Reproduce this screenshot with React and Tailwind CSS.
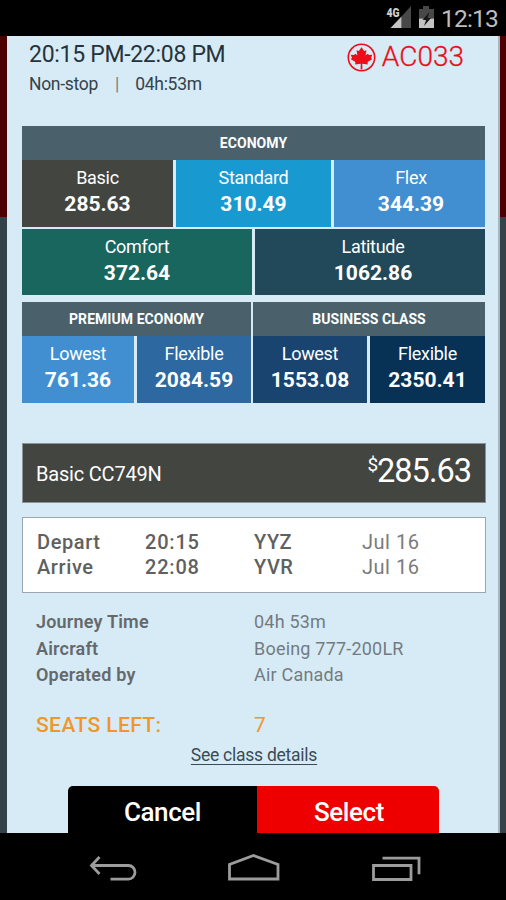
import React from 'react';

function StatusBar() {
  return (
    <div className="h-9 bg-black flex items-center justify-end pr-2">
      <svg className="w-[50px] h-6 mr-[6px]" viewBox="385 6 50 24">
        <text x="386.500" y="17" fill="#d0d0d0" fontSize="12" fontWeight="900" fontFamily="Roboto, sans-serif" textLength="13" lengthAdjust="spacingAndGlyphs">4G</text>
        <path d="M401.500 16.500L411 6v22h-9.500z" fill="#484848" />
        <path d="M390.500 28l11-11.500V28z" fill="#c4c4c4" />
        <path d="M419 9h4V6h6v3h5v9.500h-15z" fill="#484848" />
        <path d="M419 18.500h15V28h-15z" fill="#c4c4c4" />
        <path d="M429.500 12l-7 8h3.500l-2 6 7-8h-3.500z" fill="#161616" />
      </svg>
      <span className="text-[24.5px] leading-none text-[#bebebe] tracking-[-0.8px] mt-[2px]">12:13</span>
    </div>
  );
}

function FareHeader({ title }) {
  return (
    <div className="h-[34px] bg-[#4a616b] flex items-center justify-center text-white font-bold text-[14px] tracking-[0.05px]">
      {title}
    </div>
  );
}

function Fare({ name, price, color }) {
  return (
    <div className={`h-full flex flex-col items-center text-white pt-1.5 ${color}`}>
      <span className="text-[18px] tracking-[-0.3px] leading-6">{name}</span>
      <span className="text-[21px] leading-[26px] font-bold mt-px">{price}</span>
    </div>
  );
}

function Fares() {
  return (
    <div className="mt-[31px] mr-px">
      <FareHeader title="ECONOMY" />
      <div className="grid grid-cols-[151px_155px_1fr] gap-[3px] h-[67px]">
        <Fare name="Basic" price="285.63" color="bg-[#434541]" />
        <Fare name="Standard" price="310.49" color="bg-[#1899d0]" />
        <Fare name="Flex" price="344.39" color="bg-[#418fd0] pl-[3px]" />
      </div>
      <div className="grid grid-cols-[230px_1fr] gap-[3px] h-[66px] mt-[2px]">
        <Fare name="Comfort" price="372.64" color="bg-[#19665f]" />
        <Fare name="Latitude" price="1062.86" color="bg-[#21495a] pl-1.5" />
      </div>
      <div className="grid grid-cols-[229px_1fr] gap-[2px] mt-[7px]">
        <div>
          <FareHeader title="PREMIUM ECONOMY" />
          <div className="grid grid-cols-[112px_114px] gap-[3px] h-[67px]">
            <Fare name="Lowest" price="761.36" color="bg-[#418fd0]" />
            <Fare name="Flexible" price="2084.59" color="bg-[#2d68a0]" />
          </div>
        </div>
        <div>
          <FareHeader title="BUSINESS CLASS" />
          <div className="grid grid-cols-[114px_1fr] gap-[3px] h-[67px]">
            <Fare name="Lowest" price="1553.08" color="bg-[#1a4470]" />
            <Fare name="Flexible" price="2350.41" color="bg-[#073256]" />
          </div>
        </div>
      </div>
    </div>
  );
}

function Leg({ label, time, airport, date }) {
  return (
    <div className="grid grid-cols-[108px_109px_108px_1fr] text-[20px] leading-[25px] tracking-[0.5px] text-[#606060]">
      <span className="font-medium tracking-[0.6px]">{label}</span>
      <span className="font-medium tracking-[0.8px]">{time}</span>
      <span className="font-medium">{airport}</span>
      <span className="text-[#7b7b7b]">{date}</span>
    </div>
  );
}

function Detail({ label, value }) {
  return (
    <div className="grid grid-cols-[218px_1fr] text-[18px] leading-[26.5px] text-[#65696c]">
      <span className="font-semibold tracking-[0.2px]">{label}</span>
      <span className="text-[#747b80] tracking-[0.2px]">{value}</span>
    </div>
  );
}

function NavBar() {
  return (
    <div className="h-[67px] bg-black">
      <svg className="w-full h-full" viewBox="0 833 506 67" fill="none" stroke="#9c9c9c" strokeWidth="2.800">
        <path d="M99.500 857l-8 8.500 8 8.500M92 865.500h36.500a6.500 6.800 0 010 13.600H110.500" />
        <path d="M229.500 879V864.500L253.500 855.500 278 864.500V879z" />
        <path d="M373.500 865.500h37.500v14h-37.500zM382.500 858.200h36.500v16" />
      </svg>
    </div>
  );
}

function App() {
  return (
    <div className="w-[506px] h-[900px] overflow-hidden bg-black font-[Roboto,sans-serif] flex flex-col">
      <StatusBar />
      <div className="h-[797px] bg-linear-to-b from-[#4d0000] from-[181px] to-[#35424a] to-[181px] pl-[7px] pr-[6px]">
        <div className="h-full bg-[#d7ebf6] border-r-2 border-r-[#a7b5bd] pl-[15px] pr-[12px] flex flex-col">
          <div className="flex justify-between pl-[7px] pr-[22px] h-[59px]">
            <div className="text-[#26333c]">
              <h1 className="text-[23px] leading-7 mt-[5px] tracking-[-0.3px]">20:15 PM-22:08 PM</h1>
              <p className="text-[17.5px] leading-6 mt-[3px] flex text-[#34424b]">
                <span className="tracking-[-0.3px]">Non-stop</span>
                <span className="ml-[17px] mr-4 text-[#72808a]">|</span>
                <span className="tracking-[-0.3px]">04h:53m</span>
              </p>
            </div>
            <div className="flex items-center h-[42px] text-[#ec0d18] text-[28px]">
              <svg className="w-[29px] h-[29px] mr-[6px]" viewBox="0 0 29 29">
                <circle cx="14.500" cy="14.500" r="13.200" fill="none" stroke="currentColor" strokeWidth="1.600" />
                <path fill="currentColor" d="M14.500 4.300l2.700 3.700 2.300-.7-.9 5 2.200-1.500 1.200 1.300 3.200-.4-1.100 3 1 1.500-4.500 2.700.2 2.600-5.500-.7.100 5.700h-1.800l.1-5.700-5.500.7.200-2.600-4.500-2.700 1-1.500-1.100-3 3.200.4 1.200-1.300 2.200 1.500-.9-5 2.300.7z" />
              </svg>
              <span className="font-light [-webkit-text-stroke:0.3px]">AC033</span>
            </div>
          </div>

          <Fares />

          <div className="mt-10 h-[60px] bg-[#434541] border border-[#8a9296] flex items-center justify-between pl-[13px] pr-[14px] text-white shrink-0">
            <span className="text-[20px] tracking-[-0.2px] mt-0.5">Basic CC749N</span>
            <span className="flex text-[32.5px] leading-none -mt-[3px] tracking-[-1px]">
              <span className="text-[19px] leading-none">$</span>285.63
            </span>
          </div>

          <div className="mt-[14px] h-[76px] bg-white border border-[#9ba5b3] pl-[14px] pt-[12px] shrink-0">
            <Leg label="Depart" time="20:15" airport="YYZ" date="Jul 16" />
            <Leg label="Arrive" time="22:08" airport="YVR" date="Jul 16" />
          </div>

          <div className="mt-4 pl-[14px]">
            <Detail label="Journey Time" value="04h 53m" />
            <Detail label="Aircraft" value="Boeing 777-200LR" />
            <Detail label="Operated by" value="Air Canada" />
            <div className="mt-[22px] grid grid-cols-[218px_1fr] text-[21px] leading-7 text-[#f0962b]">
              <span className="font-medium tracking-[0.4px]">SEATS LEFT:</span>
              <span>7</span>
            </div>
          </div>
          <a href="#" className="self-center mt-1 text-[17.5px] leading-6 tracking-[-0.25px] text-[#3b4b55] underline underline-offset-[3px]">
            See class details
          </a>

          <div className="mt-auto ml-[46px] w-[371px] h-[47px] flex shrink-0 rounded-t-[5px] overflow-hidden text-white text-[26px] tracking-[-0.4px] font-medium">
            <button className="w-[189px] bg-black pt-[5px]">Cancel</button>
            <button className="flex-1 bg-[#ef0000] pt-[5px] pl-0.5">Select</button>
          </div>
        </div>
      </div>
      <NavBar />
    </div>
  );
}

export default App;
